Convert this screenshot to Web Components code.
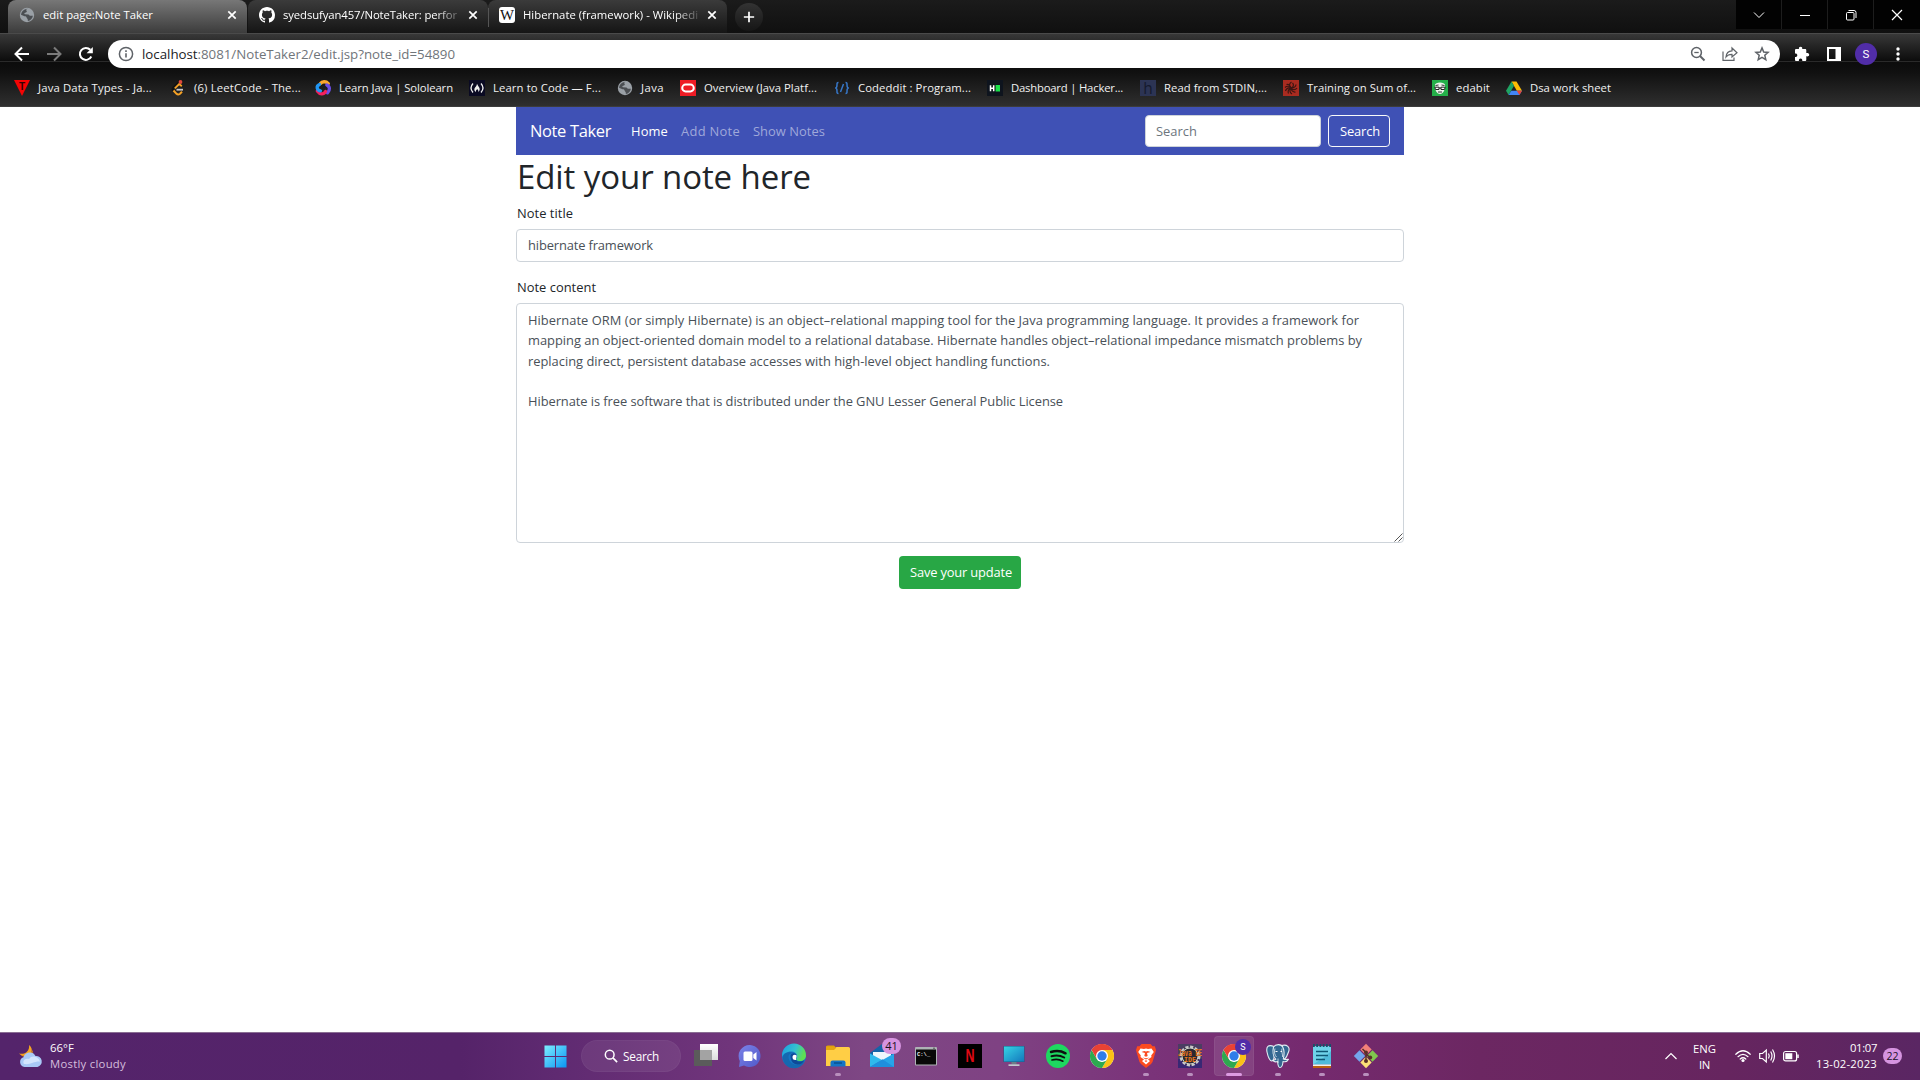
<!DOCTYPE html>
<html lang="en">
<head>
<meta charset="utf-8">
<title>edit page:Note Taker</title>
<style>
html,body{margin:0;padding:0;background:#fff;overflow:hidden}
body{font-family:"Open Sans","Noto Sans",sans-serif;width:1920px;height:1080px}
desktop-screen{height:1080px}
</style>
</head>
<body>
<desktop-screen>
  <browser-tabs slot="chrome"></browser-tabs>
  <browser-toolbar slot="chrome"></browser-toolbar>
  <bookmark-bar slot="chrome"></bookmark-bar>
  <note-page></note-page>
  <task-bar slot="taskbar"></task-bar>
</desktop-screen>
<script>
const CHROME = `<circle cx="12" cy="12" r="12" fill="#fff"/><path d="M12 12 1.6 6A12 12 0 0 1 22.4 6Z" fill="#e94235"/><path d="M12 6H22.4A12 12 0 0 1 12 24L17.2 15Z" fill="#fbc116"/><path d="M1.6 6 6.8 15 12 18 17.2 15 12 24A12 12 0 0 1 1.6 6Z" fill="#2da94f"/><path d="M12 6h10.4A12 12 0 0 0 1.6 6L6.8 15Z" fill="#e94235"/><circle cx="12" cy="12" r="6" fill="#fff"/><circle cx="12" cy="12" r="4.7" fill="#2f7de9"/>`;
const ICONS = {
  globe:[16,`<circle cx="8" cy="8" r="7.2" fill="#9aa0a6"/><path d="M9.3 1.6C7 2 6.900 3.300 7.600 4.100 8.500 5 7.200 5.600 6.100 5.700 5 5.900 5.200 7.200 6 7.300L9.300 7.500C10.200 7.600 10.200 8.700 11.200 8.800L13.900 8.700C13.500 11.700 11.300 13.600 8.900 13.900L8.700 12.200C8.500 11.300 7.700 11.500 7.600 10.500 7.500 9.500 6.800 9.300 5.500 9.200L2 7.700C2.300 4.700 4.300 2.600 7.200 2Z" fill="#3d4043" opacity=".85"/>`],
  github:[16,`<path fill="#fff" d="M8 0C3.580 0 0 3.580 0 8c0 3.540 2.290 6.530 5.470 7.590.4.070.55-.17.55-.38 0-.19-.01-.82-.01-1.490-2.010.37-2.530-.49-2.690-.94-.09-.23-.48-.94-.82-1.130-.28-.15-.68-.52-.01-.53.63-.01 1.080.58 1.230.82.72 1.210 1.870.87 2.330.66.07-.52.28-.87.51-1.070-1.780-.2-3.640-.89-3.640-3.950 0-.87.31-1.590.82-2.150-.08-.2-.36-1.020.08-2.120 0 0 .67-.21 2.200.82.64-.18 1.320-.27 2-.27s1.360.09 2 .27c1.530-1.040 2.200-.82 2.200-.82.44 1.100.16 1.920.08 2.120.51.56.82 1.270.82 2.150 0 3.070-1.870 3.750-3.650 3.950.29.25.54.73.54 1.480 0 1.070-.01 1.930-.01 2.200 0 .21.15.46.55.38A8.010 8.010 0 0 0 16 8c0-4.420-3.580-8-8-8z"/>`],
  wiki:[16,`<rect width="16" height="16" rx="3" fill="#fff"/><text x="8" y="12.600" font-family="Liberation Serif" font-size="14" textLength="14" lengthAdjust="spacingAndGlyphs" text-anchor="middle" fill="#111">W</text>`],
  close:[10,`<path d="M1.300 1.300 8.700 8.700M8.700 1.300 1.300 8.700" stroke="#fff" stroke-width="1.700"/>`],
  plus:[14,`<path d="M7 1v12M1 7h12" stroke="#fff" stroke-width="2"/>`],
  wchev:[12,`<path d="M1 3.500 6 8.500 11 3.500" fill="none" stroke="#fff" stroke-width="1"/>`],
  wmin:[12,`<path d="M1 6.500h10" stroke="#fff"/>`],
  wmax:[12,`<rect x="1.500" y="3.500" width="7.500" height="7.500" rx="1" fill="none" stroke="#fff"/><path d="M3.500 1.500H9a2 2 0 0 1 2 2V9" fill="none" stroke="#fff"/>`],
  wclose:[12,`<path d="M1 1 11 11M11 1 1 11" stroke="#fff" stroke-width="1.200"/>`],
  back:[16,`<path d="M15 8H2M8 1.500 1.500 8 8 14.500" fill="none" stroke="#fff" stroke-width="2"/>`],
  fwd:[16,`<path d="M1 8h13M8 1.500 14.500 8 8 14.500" fill="none" stroke="#7b7b7b" stroke-width="2"/>`],
  reload:[16,`<path d="M13.300 10.500A6 6 0 1 1 12.300 3.800" fill="none" stroke="#fff" stroke-width="2"/><path d="M14.800 1v6.200H8.600Z" fill="#fff"/>`],
  info:[16,`<circle cx="8" cy="8" r="6.600" fill="none" stroke="#5f6368" stroke-width="1.500"/><path d="M8 7.200v4.200M8 4.300v1.600" stroke="#5f6368" stroke-width="1.600"/>`],
  zoomout:[16,`<circle cx="6.500" cy="6.500" r="4.900" fill="none" stroke="#5f6368" stroke-width="1.500"/><path d="M10 10 14.500 14.500" stroke="#5f6368" stroke-width="2"/><path d="M4.300 6.500h4.400" stroke="#5f6368" stroke-width="1.300"/>`],
  share:[16,`<path d="M1 5.500V14.300H12V11.500" fill="none" stroke="#5f6368" stroke-width="1.200"/><path d="M4 11C4.300 7 6.500 4.900 10 4.800V2L15 6.700 10 11V8.300C7.500 8.200 5.500 9 4 11Z" fill="none" stroke="#5f6368" stroke-width="1.200"/>`],
  star:[16,`<path d="M8 1.900 9.700 6 14.100 6.400 10.800 9.300 11.800 13.700 8 11.400 4.200 13.700 5.200 9.300 1.900 6.400 6.300 6Z" fill="none" stroke="#5f6368" stroke-width="1.500"/>`],
  puzzle:[16,`<path fill="#fff" d="M1 4.300C1 3.500 1.500 3 2.300 3H5C4.600 1.600 5.400.8 6.600.8S8.600 1.600 8.200 3H11C11.800 3 12.300 3.500 12.300 4.300V7C13.800 6.700 15.200 7.300 15.200 8.700S13.800 10.700 12.300 10.300V13.700C12.300 14.500 11.800 15 11 15H8.300C8.500 13.500 7.900 12.600 6.600 12.600S4.700 13.500 4.900 15H2.300C1.500 15 1 14.500 1 13.700V11C2.500 11.100 3.300 10.300 3.300 9.200S2.500 7.400 1 7.500Z"/>`],
  panel:[16,`<path fill="#fff" fill-rule="evenodd" d="M1 1h14v14H1ZM3 3v10h6.500V3Z"/>`],
  dots:[16,`<circle cx="8" cy="3" r="1.700" fill="#fff"/><circle cx="8" cy="8" r="1.700" fill="#fff"/><circle cx="8" cy="13" r="1.700" fill="#fff"/>`],
  tpoint:[16,`<path d="M0 0H16L8 16Z" fill="#f40404"/><text x="8" y="9.500" font-family="Liberation Sans" font-weight="700" font-size="10" text-anchor="middle" fill="#300">T</text>`],
  leet:[16,`<path d="M9.800 1.500 3.600 7.200C2.300 8.500 2.300 9.500 3.400 10.600" fill="none" stroke="#111" stroke-width="2"/><path d="M11.800 6.200 9.200 4 4.800 8.300" fill="none" stroke="#f5a125" stroke-width="1.800"/><path d="M3.500 10.500 6.500 13.800C7.500 14.700 9 14.600 10 13.700L12 11.800" fill="none" stroke="#f5a125" stroke-width="2"/><path d="M6.500 9.700H13" stroke="#c9c9c9" stroke-width="1.800"/><circle cx="10.500" cy="2" r="1.900" fill="#e0493d"/>`],
  solo:[16,`<g fill="none" stroke-width="3.300" stroke-linecap="round"><path d="M5.500 3.500C7 1.300 11 1 13.300 3.500" stroke="#fca72e"/><path d="M11.800 5C15 6.500 15.300 10 12.500 12.800" stroke="#6b4de6"/><path d="M2.300 11C5 14.700 8.500 15 10.500 11.500" stroke="#f4205e"/><path d="M4.500 4.500C1 6 1.500 10 5.500 10.800" stroke="#2196f3"/></g>`],
  fcc:[16,`<rect width="16" height="16" fill="#0a0a23"/><path d="M4 3.500Q0 8 4 12.500M12 3.500Q16 8 12 12.500" fill="none" stroke="#eee" stroke-width="1.300"/><path d="M8 3.700C8.700 6 11 7.300 10.700 9.500 10.500 11 9.300 11.900 9.300 11.900 9.500 10.500 9 9.500 8.200 9.300 7.200 9.700 6.800 10.500 7 11.900 5.500 11.300 5 10 5.500 8.500 6 7 8 6 8 3.700Z" fill="#eee"/>`],
  oracle:[16,`<rect width="16" height="16" fill="#ee1c25"/><rect x="2.200" y="4.600" width="11.600" height="6.800" rx="3.400" fill="none" stroke="#fff" stroke-width="2"/>`],
  codeddit:[16,`<g fill="none" stroke="#3777c8" stroke-width="1.500"><path d="M4.500 2.500C2.800 2.500 3 3.500 3 5S2.800 8 1.200 8C2.800 8 3 9.500 3 11S2.800 13.500 4.500 13.500M11.500 2.500C13.200 2.500 13 3.500 13 5S13.200 8 14.800 8C13.200 8 13 9.500 13 11S13.200 13.500 11.500 13.500M9.500 4 6.500 12"/></g>`],
  hacker:[16,`<rect width="16" height="16" fill="#0e141e"/><path d="M3.500 5.200v6M6.700 5.200v6M3.500 8.200h3.200" stroke="#fff" stroke-width="1.500"/><rect x="8.600" y="5" width="4.400" height="6.500" fill="#1ae04a"/>`],
  hearth:[16,`<rect width="16" height="16" fill="#2c3454"/><text x="8" y="13.600" font-family="Open Sans" font-size="15.500" text-anchor="middle" fill="#151a2e">h</text>`],
  codewars:[16,`<rect width="16" height="16" fill="#a92b20"/><g fill="none" stroke="#3a1512" stroke-width="1.200"><path id="a" d="M8 8C6 6 6 3.500 8.500 2M8 8C10.700 7.200 11 4.500 9.500 3M8 8C10.800 8.300 13 6.500 13 4.500M8 8C9.500 10.500 12.500 10 14 8M8 8C8 10.500 10.500 12.500 12.500 12M8 8C6 10 7 13 9 14M8 8C5.500 8.500 4.500 11.500 5.500 13.500M8 8C5.500 7 3 9 2.500 11M8 8C6.500 5.500 3.500 6 2 7.500M8 8C7.500 5.500 5.500 4 3.500 4.500"/></g>`],
  edabit:[16,`<rect width="16" height="16" fill="#25b04a"/><path d="M3 5C3 1.500 13 1.500 13 5 13.300 9.500 11.500 14 8 14S2.700 9.500 3 5Z" fill="#eef4ee"/><path d="M2.800 7.200H7V9.500H3.500ZM9 7.200h4.200L12.500 9.500H9ZM7 8h2" fill="#fff" stroke="#222" stroke-width="1"/><path d="M6 12h4M3.500 5.500 6.500 5M9.500 5 12.500 5.500" stroke="#333" stroke-width="1"/>`],
  drive:[16,`<path d="M5.500 1.500h5L16 10.800H10.800Z" fill="#fbbc04"/><path d="M5.500 1.500 0 10.800 2.600 15 8 5.800Z" fill="#1fa463"/><path d="M5.300 10.800H16L13.400 15H2.600Z" fill="#4285f4"/><path d="M10.800 10.800H16L13.400 15Z" fill="#ea4335"/>`],
  weather:[24,`<path d="M10 1C15 5 13 11 7 12.500 4 12.500 2 11.500 0 9.500 6 11 11 7 10 1Z" fill="#f5a623"/><path d="M14 5.500C13 9 8 12 2 10.500 3 14 14 14 13.800 7Z" fill="#e88e1a"/><path d="M5.500 23A5 5 0 0 1 4.500 13.300 6.500 6.500 0 0 1 16.500 12 5.600 5.600 0 0 1 18.500 23Z" fill="#a9c9f6"/><path d="M5 20C3 17 6 13.500 10 15 13 10 20 13 21 17.500 15 17 12 21 5 20Z" fill="#d3e5fd"/>`],
  start:[24,`<defs><linearGradient id="w" x1="0" y1="0" x2="1" y2="1"><stop offset="0" stop-color="#7defff"/><stop offset="1" stop-color="#0a94f3"/></linearGradient></defs><path d="M.5.5H11.500V11.500H.5ZM12.500.5H23.500V11.500H12.500ZM.5 12.500H11.500V23.500H.5ZM12.500 12.500H23.500V23.500H12.500Z" fill="url(#w)"/>`],
  search:[16,`<circle cx="6.500" cy="6.500" r="5" fill="none" stroke="#fff" stroke-width="1.700"/><path d="M10.200 10.200 15 15" stroke="#fff" stroke-width="1.900"/>`],
  taskview:[24,`<defs><linearGradient id="t" x2="0" y2="1"><stop stop-color="#fff"/><stop offset="1" stop-color="#dcdcdc"/></linearGradient></defs><path d="M6 0H24V16H6Z" fill="url(#t)"/><path d="M0 6H18V22H0Z" fill="#5b5b5b"/><path d="M6 6H18V16H6Z" fill="#a3a3a3"/>`],
  chat:[24,`<defs><linearGradient id="c" x2="1" y2="1"><stop stop-color="#7c83e8"/><stop offset="1" stop-color="#5059c9"/></linearGradient></defs><path d="M12 1A11 11 0 1 1 6 21.500L1 23 1.800 17A11 11 0 0 1 12 1Z" fill="url(#c)"/><rect x="5.500" y="7.500" width="9" height="9.500" rx="1.500" fill="#fff"/><path d="M15.300 10.500 18.500 8V16.500L15.300 14Z" fill="#fff"/>`],
  edge:[24,`<defs><linearGradient id="e" x2="1" y2=".3"><stop stop-color="#1b9de2"/><stop offset=".6" stop-color="#35c1d0"/><stop offset="1" stop-color="#5fe053"/></linearGradient></defs><circle cx="12" cy="12" r="12" fill="#1676c5"/><path d="M0 11.500A12 12 0 0 1 24 11.500C24 15 21.500 17 18 17 15 17 13.500 16 14.500 14.500 16 12 14.500 8 10 7.500 5 7.200 1.500 9.500 0 13Z" fill="url(#e)"/><path d="M6.500 12.500C6.500 18 11 21.500 16.500 20.500 19 20 21 19 22.500 17.500 19 25 9.500 26.500 4 21 .5 17 0 12 2.500 10 4.500 8 9.500 7.500 11.500 9 8.500 9 6.500 10.500 6.500 12.500Z" fill="#1568b0"/><path d="M8.500 12C8.500 9 13 8 14.500 11 15.300 13 13.200 14.500 14.200 16 15.500 18 19.500 18 22.500 16 20.500 20.500 16 21.500 12.500 19.800 9.700 18.400 8.500 15 8.500 12Z" fill="#0f4a97"/><path d="M10.500 13C10.500 11 13 10 14.600 11.500 15 13.500 13.300 14.500 14.200 16 11.500 16.500 10.500 14.800 10.500 13Z" fill="#fff"/>`],
  explorer:[24,`<path d="M0 3A1.500 1.500 0 0 1 1.500 1.500H8L10 4H0Z" fill="#dd9b0b"/><path d="M0 4.500 8 5 10.500 3H22.500A1.500 1.500 0 0 1 24 4.500V22H0Z" fill="#ffce45"/><path d="M0 2.500H8.500L10 4 8 6H0Z" fill="#e5a50f"/><path d="M4.500 22.500V18.500A2 2 0 0 1 6.500 16.500H17.500A2 2 0 0 1 19.500 18.500V22.500Z" fill="#1475c6"/><path d="M8 19h8" stroke="#0b5a9d" stroke-width="2"/>`],
  mail:[24,`<path d="M0 9 12 0 24 9V12H0Z" fill="#1464a8"/><path d="M3 8H21V16L12 18 3 16Z" fill="#eef7fc"/><path d="M0 9.500 12 16 0 23Z" fill="#2fb9ec"/><path d="M24 9.500V23H0Z" fill="#27a5e8"/><path d="M0 23 12.500 15.300 24 23Z" fill="#1f8fdd"/>`],
  cmd:[24,`<rect x="1" y="3" width="22" height="18.500" rx="1" fill="#aeb2b5"/><rect x="2" y="5.500" width="20" height="15" fill="#080808"/><path d="M19 4.200h2" stroke="#555"/><text x="3" y="11.500" font-family="Liberation Mono" font-weight="700" font-size="5.500" fill="#eee">C:\\_</text>`],
  netflix:[24,`<rect width="24" height="24" fill="#000"/><text x="12" y="18" font-family="Liberation Sans" font-weight="700" font-size="17.500" textLength="9" lengthAdjust="spacingAndGlyphs" text-anchor="middle" fill="#e00914">N</text>`],
  pc:[24,`<defs><linearGradient id="p" x2="1" y2="1"><stop stop-color="#36d4e5"/><stop offset="1" stop-color="#1378bd"/></linearGradient></defs><rect x="1.500" y="2" width="21" height="16" fill="#1a5f85"/><rect x="2" y="2.500" width="20" height="15" fill="url(#p)"/><path d="M9.500 18h5v2.500h-5Z" fill="#6d7d87"/><path d="M6.500 20.300h11v1.700h-11Z" fill="#c1c9ce"/>`],
  spotify:[24,`<circle cx="12" cy="12" r="12" fill="#1ed760"/><g fill="none" stroke="#0d0f0e" stroke-linecap="round"><path d="M5 8C10 6.500 15.500 7 19.500 9.300" stroke-width="2.500"/><path d="M5.500 12.200C10 10.900 14.500 11.400 18.200 13.500" stroke-width="2"/><path d="M6 16C10 15 13.500 15.300 16.900 17.200" stroke-width="1.700"/></g>`],
  chrome:[24,CHROME],
  brave:[24,`<path d="M7.500 0H16.500L18.500 2.200H20.800L22 6 21.500 8 18.500 18 17 20 12 24 7 20 5.500 18 2.500 8 2 6 3.200 2.200H5.500Z" fill="#fb4a1f"/><path d="M6.500 4.500 10 5 12 4.500 14 5 17.500 4.500 19.800 8 17.200 11.500 17.500 13 14 15.500 16 17 12 20.500 8 17 10 15.500 6.500 13 6.800 11.500 4.200 8Z" fill="#fff"/><path d="M7.500 8 11 9 10.300 12 12 12.800 13.700 12 13 9 16.500 8 13.800 7 12 7.500 10.200 7ZM8.500 13.500 12 15.500 15.500 13.500 12 14.200ZM10.500 17 12 18 13.500 17 12 16.300Z" fill="#fb4a1f"/>`],
  javaee:[24,`<rect width="24" height="24" fill="#4b3d62"/><path d="M0 15H24V24H0Z" fill="#382874"/><circle cx="12" cy="12" r="9.300" fill="#28242b" stroke="#c9cac8" stroke-width="2.400" stroke-dasharray="3.200 1.650"/><circle cx="12" cy="12" r="8" fill="#2b2831" stroke="#d0d0cd" stroke-width="1"/><g font-family="DejaVu Sans Mono" font-weight="700" fill="#ec7a1c"><text x="0" y="11.500" font-size="8" textLength="24" lengthAdjust="spacingAndGlyphs">Java EE</text><text x="6" y="17.500" font-size="7" textLength="12" lengthAdjust="spacingAndGlyphs">IDE</text></g>`],
  postgres:[24,`<g stroke="#e3edf3" stroke-width="1.100" fill="#336791" stroke-linejoin="round"><path d="M8 2.500C2 0 0 3 1 8 2 13 4 17.500 6 17 8 16 8.500 13 8.500 10Z"/><path d="M15.500 1.500C21 0 24.500 3 22.500 8 21.500 11 20 14 18.500 15.500L16 12Z"/><path d="M7.500 3C9.500 0 15.500-.5 17 3.500 18.500 7 18 12 17.300 15 20 16 21 15.200 22.500 15.300 21.500 17.500 19 18 17 17.500 16.800 21 16.500 23.500 14 23.500 12 23.500 11.800 21 11.700 17.500 10 18 8 18 7 16.500L9.800 15.200C7 12.500 6.500 7 7.500 3Z"/></g><path d="M9 4.500C8 8 8.500 11 10.500 13M16 4.500C15 8 17 10 16.500 13M12 14.500V19" fill="none" stroke="#e3edf3" stroke-width=".8"/><path d="M9.500 7.500h2M14.500 7.500h1.500" stroke="#fff" stroke-width="1.100"/>`],
  notepad:[24,`<path d="M3 2H21V20.500H3Z" fill="#6fd3ea"/><path d="M16 12 21 7V20.500H3Z" fill="#4fbbdb"/><path d="M3 20.500H21V22.500H3Z" fill="#f2f0ed"/><path d="M3 22H21V24H3Z" fill="#bd6210"/><path d="M3 1.500H21" stroke="#174f68" stroke-width="3" stroke-dasharray="1.800 1.440"/><path d="M6 7.500H18M6 11.500H18M6 15.500H15" stroke="#0e5876" stroke-width="1.500"/>`],
  git:[24,`<g transform="rotate(45 12 12)"><rect x="3.400" y="3.400" width="8" height="8" fill="#f28079"/><rect x="12.600" y="3.400" width="8" height="8" fill="#80c84e"/><rect x="3.400" y="12.600" width="8" height="8" fill="#74a6ec"/><rect x="12.600" y="12.600" width="8" height="8" fill="#fbe077"/></g><g fill="none" stroke="#573028" stroke-width="1.500"><path d="M8.500 5 12 8.500V18M12 10 16 13.500"/></g><g fill="#573028"><circle cx="12" cy="8.500" r="2"/><circle cx="16.200" cy="13.500" r="2"/><circle cx="12" cy="17" r="2"/></g>`],
  upchev:[12,`<path d="M.5 9 6 3.500 11.500 9" fill="none" stroke="#fff" stroke-width="1.200"/>`],
  wifi:[16,`<g fill="none" stroke="#fff" stroke-width="1.200" stroke-linecap="round"><path d="M.8 6.300Q8-.8 15.200 6.300M3 8.700Q8 4 13 8.700M5.200 11Q8 8.500 10.800 11"/></g><circle cx="8" cy="12.500" r="1.600" fill="#fff"/>`],
  sound:[16,`<g fill="none" stroke="#fff" stroke-width="1.200"><path d="M.7 5.500H3.500L7.300 2V14L3.500 10.500H.7Z"/><path d="M9.500 5.500Q11 8 9.500 10.500M11.700 3.500Q14.300 8 11.700 12.500M13.500 1.500Q17.500 8 13.500 14.500"/></g>`],
  battery:[16,`<rect x=".6" y="3.500" width="13" height="9.400" rx="2" fill="none" stroke="#fff" stroke-width="1.200"/><rect x="2.300" y="5.200" width="7" height="6" fill="#fff"/><path d="M15 6.500v3.500" stroke="#fff" stroke-width="1.500"/>`],
  grip:[9,`<path d="M.5 8.500 8.500.5M4.500 8.500 8.500 4.500" stroke="#555" stroke-width="1"/>`]
};

class Base extends HTMLElement {
  constructor(){ super(); this.attachShadow({mode:'open'}); }
  paint(css, html){ this.shadowRoot.innerHTML = `<style>*{box-sizing:border-box}${css}</style>${html}`; }
}

class UiIcon extends Base {
  connectedCallback(){
    const [box, body] = ICONS[this.getAttribute('name')];
    const s = this.getAttribute('size') || box;
    this.paint(`:host{display:block;flex:none;width:${s}px;height:${s}px}svg{display:block;overflow:visible}`,
      `<svg width="${s}" height="${s}" viewBox="0 0 ${box} ${box}">${body}</svg>`);
  }
}

/* A single line of text whose tracking is set so that it spans w pixels. */
class FitText extends Base {
  connectedCallback(){
    this.paint(`:host{display:block;flex:none;width:max-content;white-space:pre}`, `<slot></slot>`);
    const w = parseFloat(this.getAttribute('w'));
    this.style.letterSpacing = '0px';
    const natural = this.getBoundingClientRect().width;
    this.style.letterSpacing = ((w - natural) / this.textContent.length).toFixed(4) + 'px';
    this.style.width = w + 'px';
  }
}

class DesktopScreen extends Base {
  connectedCallback(){
    this.paint(`:host{display:flex;flex-direction:column;width:1920px}main{flex:1;min-height:0}`,
      `<slot name="chrome"></slot><main><slot></slot></main><slot name="taskbar"></slot>`);
  }
}

class BrowserTab extends Base {
  connectedCallback(){
    const a = this.hasAttribute('active');
    this.paint(`
      :host{display:flex;align-items:center;width:${this.getAttribute('width')}px;height:33px;padding:0 10px 5px 11px;gap:8px;
        border-radius:8px 8px 0 0;background:${a ? 'linear-gradient(#777,#3c3c3c)' : 'linear-gradient(#3b3b3b,#151515)'};color:#fff;font-size:11.300px;line-height:28px}
      .t{flex:1;min-width:0;overflow:hidden;height:28px;${a ? '' : '-webkit-mask-image:linear-gradient(90deg,#000 86%,rgba(0,0,0,.15));mask-image:linear-gradient(90deg,#000 86%,rgba(0,0,0,.15));'}}`,
      `<ui-icon name="${this.getAttribute('icon')}" size="16"></ui-icon><div class="t"><slot></slot></div><ui-icon name="close" size="10"></ui-icon>`);
  }
}

class BrowserTabs extends Base {
  connectedCallback(){
    this.paint(`
      :host{display:flex;flex:none;height:33px;padding-left:8px;background:linear-gradient(#1b1b1b,#101010)}
      browser-tab{padding-top:1px}
      .sep{width:1px;height:19px;margin:8px -1px 0 0;background:#555;z-index:1}
      .new{width:28px;height:28px;border-radius:50%;background:linear-gradient(#333,#161616);margin:3px 0 0 8px;display:grid;place-items:center}
      .space{flex:1}
      .win{display:flex;gap:1px;height:29px;background:#1d1d1d;padding-left:0}
      .win div{width:45px;background:#020202;display:grid;place-items:center}
      .win div:last-child{width:46px}`,
      `<browser-tab active width="239" icon="globe"><fit-text w="110">edit page:Note Taker</fit-text></browser-tab>
       <browser-tab width="240" icon="github" style="margin-left:1px"><fit-text w="174">syedsufyan457/NoteTaker: perfor</fit-text></browser-tab>
       <div class="sep"></div>
       <browser-tab width="239" icon="wiki"><fit-text w="175">Hibernate (framework) - Wikipedi</fit-text></browser-tab>
       <div class="new"><ui-icon name="plus" size="12"></ui-icon></div><div class="space"></div>
       <div class="win"><div><ui-icon name="wchev"></ui-icon></div><div><ui-icon name="wmin"></ui-icon></div><div><ui-icon name="wmax"></ui-icon></div><div><ui-icon name="wclose"></ui-icon></div></div>`);
  }
}

class BrowserToolbar extends Base {
  connectedCallback(){
    this.paint(`
      :host{display:flex;flex:none;align-items:center;height:36px;padding:2px 14px 0;gap:16px;border-top:1px solid #4a4a4a;
        background:linear-gradient(#383838 0,#0c0c0c 27px,#2a2a2a 27px,#2a2a2a 28px,#0c0c0c 28px,#101010)}
      .omni{flex:none;width:1672px;margin:0 -2px;height:28px;border-radius:14px;background:#fff;display:flex;align-items:center;padding:0 10px;gap:8px;font-size:13.300px;line-height:28px;color:#70757a}
      .omni b{font-weight:400;color:#202124}.gap{flex:1}
      .acts{display:flex;gap:16px}
      .av{width:22px;height:22px;margin:0 -3px;border-radius:50%;background:#512da8;color:#fff;font:11.500px/22px Roboto,sans-serif;text-align:center}`,
      `<ui-icon name="back"></ui-icon><ui-icon name="fwd"></ui-icon><ui-icon name="reload"></ui-icon>
       <div class="omni"><ui-icon name="info"></ui-icon><fit-text w="313"><b>localhost</b>:8081/NoteTaker2/edit.jsp?note_id=54890</fit-text><div class="gap"></div>
       <div class="acts"><ui-icon name="zoomout"></ui-icon><ui-icon name="share"></ui-icon><ui-icon name="star"></ui-icon></div></div>
       <ui-icon name="puzzle"></ui-icon><ui-icon name="panel"></ui-icon><div class="av">S</div><ui-icon name="dots"></ui-icon>`);
  }
}

class BookmarkBar extends Base {
  connectedCallback(){
    const items = [['tpoint','Java Data Types - Ja...',156,114],['leet','(6) LeetCode - The...',145,107],['solo','Learn Java | Sololearn',154,114],['fcc','Learn to Code — F...',148,108],['globe','Java',63,23],['oracle','Overview (Java Platf...',154,113],['codeddit','Codeddit : Program...',153,113],['hacker','Dashboard | Hacker...',153,112],['hearth','Read from STDIN,...',143,103],['codewars','Training on Sum of...',149,109],['edabit','edabit',74,34],['drive','Dsa work sheet',110,81]];
    this.paint(`
      :host{display:flex;flex:none;height:34px;padding-left:14px;background:linear-gradient(#101010,#2f2f2f);border-bottom:1px solid #3c3c3c}
      div{display:flex;align-items:center;gap:8px;height:31px;flex:none;color:#f1f1f1;font-size:11.300px;line-height:30px}`,
      items.map(([i,t,p,w]) => `<div style="width:${p}px"><ui-icon name="${i}" size="16"></ui-icon><fit-text w="${w}">${t}</fit-text></div>`).join(''));
  }
}

class NoteNavbar extends Base {
  connectedCallback(){
    this.paint(`
      :host{display:flex;align-items:center;height:48px;padding:0 14px;background:#3f51b5;color:#fff;font-size:12.900px;line-height:30px}
      .brand{font-size:16.500px;margin-right:20px;padding-bottom:1px}
      .links{display:flex;gap:13px;flex:1}.dim{color:#9fa8da}
      .field{width:176px;height:32px;border:1px solid #ced4da;border-radius:4px;background:#fff;color:#6c757d;padding-left:10px;margin-right:7px}
      .btn{width:62px;height:32px;border:1px solid #f8f9fa;border-radius:4px;padding-left:11px}`,
      `<div class="brand"><fit-text w="81">Note Taker</fit-text></div>
       <div class="links"><fit-text w="37">Home</fit-text><fit-text class="dim" w="59">Add Note</fit-text><fit-text class="dim" w="72">Show Notes</fit-text></div>
       <div class="field"><fit-text w="41">Search</fit-text></div><div class="btn"><fit-text w="40">Search</fit-text></div>`);
  }
}

class NotePage extends Base {
  connectedCallback(){
    this.paint(`
      :host{display:block;width:888px;margin:0 auto;color:#212529;font-size:12.900px}
      h1{margin:0;font-size:33px;font-weight:500;line-height:44px;height:48px;padding-left:1px}
      .label{line-height:20px;height:26px;padding-left:1px}
      .input{height:33px;border:1px solid #ced4da;border-radius:4px;padding-left:11px;line-height:31px;color:#495057;margin-bottom:15px}
      .area{height:240px;border:1px solid #ced4da;border-radius:4px;padding:6px 0 0 11px;color:#495057;line-height:20.250px;display:grid;grid-template-rows:repeat(5,20.250px) 1fr}
      .grip{place-self:end;padding:0 1px 1px 0}
      .btn{width:122px;height:33px;margin:13px auto 0;border-radius:4px;background:#28a745;color:#fff;line-height:33px;padding-left:11px}`,
      `<note-navbar></note-navbar>
       <h1><fit-text w="294">Edit your note here</fit-text></h1>
       <div class="label"><fit-text w="56">Note title</fit-text></div>
       <div class="input"><fit-text w="125">hibernate framework</fit-text></div>
       <div class="label"><fit-text w="79">Note content</fit-text></div>
       <div class="area">
         <fit-text w="831">Hibernate ORM (or simply Hibernate) is an object–relational mapping tool for the Java programming language. It provides a framework for</fit-text>
         <fit-text w="834">mapping an object-oriented domain model to a relational database. Hibernate handles object–relational impedance mismatch problems by</fit-text>
         <fit-text w="522">replacing direct, persistent database accesses with high-level object handling functions.</fit-text>
         <div></div>
         <fit-text w="535">Hibernate is free software that is distributed under the GNU Lesser General Public License</fit-text>
         <ui-icon class="grip" name="grip"></ui-icon>
       </div>
       <div class="btn"><fit-text w="102">Save your update</fit-text></div>`);
  }
}

class TaskApp extends Base {
  connectedCallback(){
    const st = this.getAttribute('state'), b = this.getAttribute('badge');
    this.paint(`
      :host{display:grid;place-items:center;width:44px;height:48px;flex:none}
      .tile{position:relative;width:40px;height:40px;border-radius:4px;display:grid;place-items:center;${st==='active'?'background:rgba(255,255,255,.1);box-shadow:inset 0 0 0 1px rgba(255,255,255,.06);':''}}
      .bar{position:absolute;bottom:0;left:50%;transform:translateX(-50%);height:3px;border-radius:2px;width:${st==='active'?16:6}px;background:${st==='active'?'#dd9be2':'#b98fbd'}}
      .badge{position:absolute;left:20px;top:2px;width:19px;height:16px;border-radius:8px;background:#d694e0;color:#1c1020;font-size:11px;line-height:16px;text-align:center}
      .user{left:21px;top:3px;width:16px;height:16px;background:#512da8;color:#fff;font-family:Roboto;font-size:9px}`,
      `<div class="tile"><ui-icon name="${this.getAttribute('icon')}" size="24"></ui-icon>${st?'<div class="bar"></div>':''}${b?`<div class="badge ${b==='S'?'user':''}">${b}</div>`:''}</div>`);
  }
}

class TaskBar extends Base {
  connectedCallback(){
    const apps = [['taskview'],['chat'],['edge'],['explorer','run'],['mail','','41'],['cmd'],['netflix'],['pc'],['spotify'],['chrome'],['brave','run'],['javaee','run'],['chrome','active','S'],['postgres','run'],['notepad','run'],['git','run']];
    this.paint(`
      :host{display:flex;flex:none;height:48px;align-items:center;color:#fff;font-size:11.300px;
        background:linear-gradient(#8a6d93 0,#8a6d93 1px,transparent 1px),linear-gradient(90deg,#54246b 0,#552369 24%,#5f2a71 29%,#70357b 38%,#7e4784 45%,#7f4283 52%,#7a3379 60%,#752a6f 68%,#6c2762 77%,#66255f 90%,#5a2663 100%)}
      .weather{display:flex;gap:7px;width:525px;padding:0 0 0 19px;align-items:center}
      .two{display:flex;flex-direction:column;line-height:16px}.soft{color:#d5bfdd}
      .pill{display:flex;align-items:center;gap:5px;width:100px;height:32px;margin:0 3px 0 3px;padding-left:23px;border-radius:16px;background:rgba(255,255,255,.07);box-shadow:inset 0 0 0 1px rgba(255,255,255,.04);line-height:30px;font-size:11.800px}
      .apps{display:flex;flex:1}
      .tray{display:flex;align-items:center}
      .lang{margin:1px 19px 0 16px;align-items:center}.icons{display:flex;gap:8px;margin-right:17px}
      .clock{align-items:flex-end;margin-right:6px}
      .n{width:19px;height:16px;border-radius:8px;background:#d694e0;color:#21102a;text-align:center;line-height:16px;font-size:10.500px;margin-right:18px}`,
      `<div class="weather"><ui-icon name="weather"></ui-icon><div class="two"><fit-text w="24">66°F</fit-text><fit-text class="soft" w="76">Mostly cloudy</fit-text></div></div>
       <div style="width:53px;padding-left:19px"><ui-icon name="start" size="23"></ui-icon></div>
       <div class="pill"><ui-icon name="search" size="14"></ui-icon><fit-text w="36">Search</fit-text></div>
       <div class="apps">${apps.map(([i,s,b]) => `<task-app icon="${i}"${s?` state="${s}"`:''}${b?` badge="${b}"`:''}></task-app>`).join('')}</div>
       <div class="tray"><ui-icon name="upchev"></ui-icon><div class="two lang"><fit-text w="23">ENG</fit-text><fit-text w="11">IN</fit-text></div>
       <div class="icons"><ui-icon name="wifi"></ui-icon><ui-icon name="sound"></ui-icon><ui-icon name="battery"></ui-icon></div>
       <div class="two clock"><fit-text w="27">01:07</fit-text><fit-text w="61">13-02-2023</fit-text></div><div class="n">22</div></div>`);
  }
}

customElements.define('desktop-screen', DesktopScreen);
customElements.define('browser-tabs', BrowserTabs);
customElements.define('browser-tab', BrowserTab);
customElements.define('browser-toolbar', BrowserToolbar);
customElements.define('bookmark-bar', BookmarkBar);
customElements.define('note-page', NotePage);
customElements.define('note-navbar', NoteNavbar);
customElements.define('task-bar', TaskBar);
customElements.define('task-app', TaskApp);
customElements.define('ui-icon', UiIcon);
customElements.define('fit-text', FitText);
</script>
</body>
</html>
